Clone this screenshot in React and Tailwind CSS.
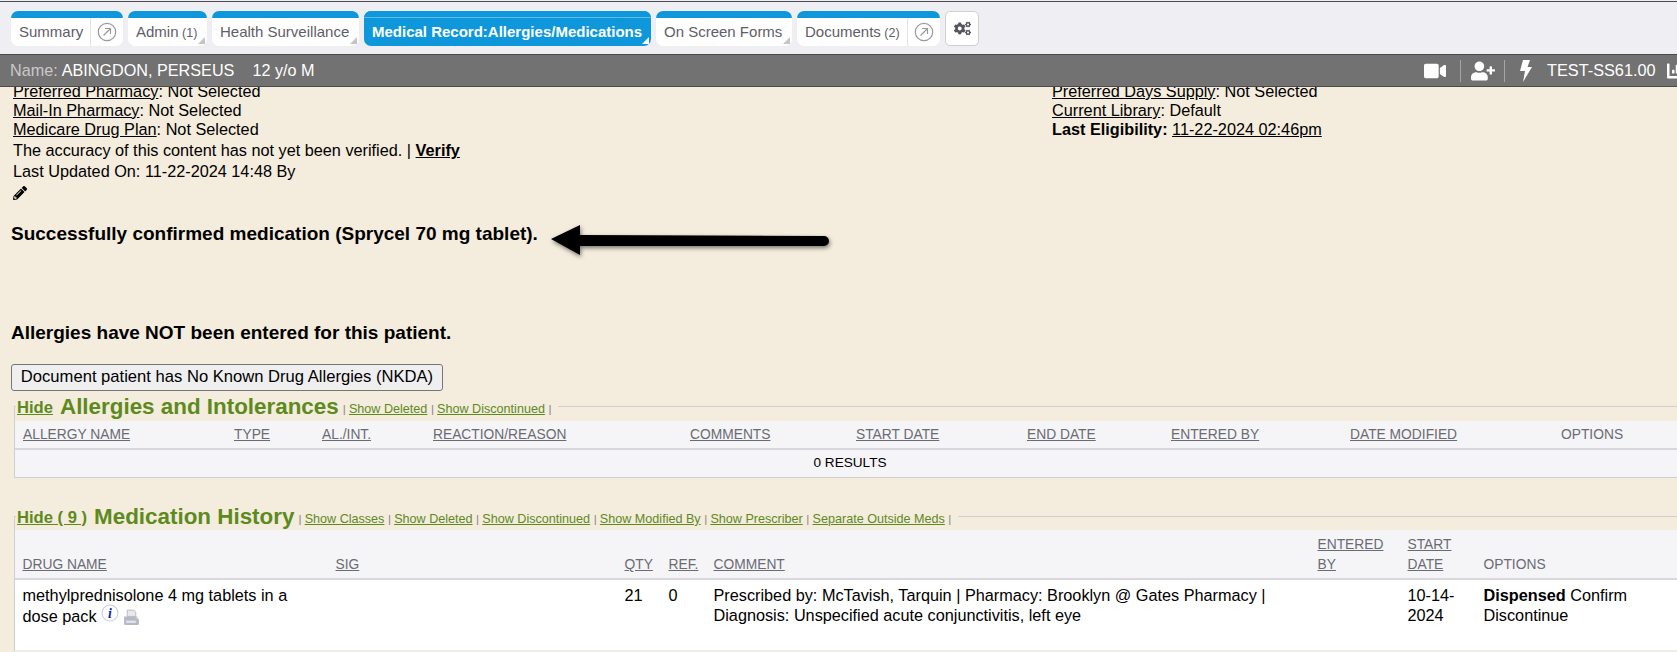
import React from "react";
import { FaVideo, FaUserPlus, FaPencilAlt, FaCogs, FaChartBar } from "react-icons/fa";

const Corner = ({ light }) => (
  <span className={`absolute right-[2px] bottom-[2px] w-0 h-0 border-l-[7px] border-l-transparent border-b-[7px] ${light ? "border-b-white" : "border-b-[#c4c4c4]"}`} />
);

const Circle = () => (
  <span className="flex items-center justify-center w-[33px] h-full shrink-0 border-l border-[#e4e4e8]">
    <svg width="20" height="20" viewBox="0 0 20 20" fill="none" stroke="#9a9a9a" strokeWidth="1.2">
      <circle cx="10" cy="10" r="8.7" />
      <path d="M6.5 13.5 L13.5 6.5 M8 6.5 H13.5 V12" />
    </svg>
  </span>
);

const Tab = ({ label, count, width, active, corner, circle }) => (
  <div className={`relative shrink-0 h-[35px] rounded-[7px] overflow-hidden flex flex-col ${active ? "bg-[#0e97da]" : "bg-white"}`} style={{ width }}>
    <div className={`h-[7px] bg-[#0e97da] shrink-0 ${active ? "border-b border-[#5dbbe8]" : ""}`} />
    <div className={`flex-1 flex items-center ${circle ? "justify-between" : ""} pl-[8px]`}>
      <span className={`text-[15px] whitespace-nowrap ${active ? "font-bold text-white" : "text-[#5e5e66]"}`}>
        {label}
        {count && <span className="text-[12.5px]"> {count}</span>}
      </span>
      {circle && <Circle />}
    </div>
    {corner && <Corner light={active} />}
  </div>
);

const Link = ({ children, className = "" }) => <span className={`underline ${className}`}>{children}</span>;

const Th = ({ children, className = "", plain }) => (
  <div className={`text-[13.8px] leading-[20px] text-[#6b6b73] ${plain ? "" : "underline"} ${className}`}>{children}</div>
);

const Legend = ({ hide, title, links, height, pad, lineTop }) => (
  <div className={`relative flex items-end bg-[#f4ecdd] ${pad}`} style={{ height }}>
    <span className={`absolute left-[1px] right-0 h-px bg-[#cfcfcf] ${lineTop}`} />
    <span className={`absolute left-[1px] bottom-0 w-px bg-[#cfcfcf] ${lineTop}`} />
    <div className="relative flex items-end text-[#5d8a1c] ml-[3px] px-[1px] whitespace-nowrap bg-[#f4ecdd]">
      <span className="text-[16.6px] font-bold underline leading-[20px]">{hide}</span>
      <span className="text-[22.4px] font-bold leading-[26px] ml-[7px] -mb-[2px]">{title}</span>
      <span className="text-[12.6px] leading-[18px] ml-[4px] pr-[6px]">
        {links.map((l) => (
          <span key={l}>
            <span className="text-[#888] text-[11.6px]">| </span>
            <span className="underline">{l}</span>{" "}
          </span>
        ))}
        <span className="text-[#888] text-[11.6px]">|</span>
      </span>
    </div>
  </div>
);

export default function App() {
  return (
    <div className="w-[1677px] h-[652px] overflow-hidden bg-[#f4ecdd] text-black text-[16.25px]" style={{ fontFamily: '"Liberation Sans", Arial, sans-serif' }}>
      <div className="h-px bg-[#eeeef3]" />
      <div className="h-[54px] bg-[#eeeef3] border-t border-t-[#4a4a52] border-b border-b-[#4a4a52] flex items-start gap-[5px] pl-[11px] pt-[9px]">
        <Tab label="Summary" width={112} circle />
        <Tab label="Admin" count="(1)" width={79} corner />
        <Tab label="Health Surveillance" width={147} corner />
        <Tab label="Medical Record:Allergies/Medications" width={287} active corner />
        <Tab label="On Screen Forms" width={136} corner />
        <Tab label="Documents" count="(2)" width={143} circle />
        <div className="w-[34px] h-[35px] bg-white border border-[#cfcfd4] rounded-[5px] flex items-center justify-center text-[#55555c]">
          <FaCogs size={17} />
        </div>
      </div>

      <div className="relative z-10 h-[32px] bg-[#727272] border-b border-[#4a4a4a] flex items-center text-[16.2px] pl-[10px] overflow-hidden">
        <span className="text-[#c9c9c9]">Name:</span>
        <span className="text-white ml-[4px]">ABINGDON, PERSEUS</span>
        <span className="text-white ml-[18px]">12 y/o M</span>
        <div className="ml-auto flex items-center text-white shrink-0 w-[253px]">
          <FaVideo size={22} className="shrink-0" />
          <span className="ml-[14px] h-[22px] w-px bg-[#a5a5a5] shrink-0" />
          <FaUserPlus size={24} className="ml-[10px] shrink-0" />
          <span className="ml-[9px] h-[22px] w-px bg-[#a5a5a5] shrink-0" />
          <svg className="ml-[15px] shrink-0" width="12" height="22" viewBox="0 0 12 22" fill="#fff">
            <path d="M3 0 H10 L7.5 7 H12 L3 22 L5 11 H0 Z" />
          </svg>
          <span className="ml-[15px] text-[16.3px] whitespace-nowrap shrink-0">TEST-SS61.00</span>
          <FaChartBar size={20} className="ml-[11px] shrink-0" />
        </div>
      </div>

      <div className="relative pl-[13px]">
        <div className="flex -mt-[5px]">
          <div className="w-[1039px] shrink-0">
            <div className="leading-[19px]"><Link>Preferred Pharmacy</Link>: Not Selected</div>
            <div className="leading-[19px]"><Link>Mail-In Pharmacy</Link>: Not Selected</div>
            <div className="leading-[19px]"><Link>Medicare Drug Plan</Link>: Not Selected</div>
            <div className="leading-[21px] mt-px">The accuracy of this content has not yet been verified. | <Link className="font-bold">Verify</Link></div>
            <div className="leading-[21px]">Last Updated On: 11-22-2024 14:48 By</div>
            <div className="h-[21px] flex items-center"><FaPencilAlt size={14} /></div>
          </div>
          <div>
            <div className="leading-[19px]"><Link>Preferred Days Supply</Link>: Not Selected</div>
            <div className="leading-[19px]"><Link>Current Library</Link>: Default</div>
            <div className="leading-[19px]"><b>Last Eligibility:</b> <Link>11-22-2024 02:46pm</Link></div>
          </div>
        </div>

        <div className="relative -ml-[2px] mt-[19px] text-[19px] font-bold leading-[24px]">
          Successfully confirmed medication (Sprycel 70 mg tablet).
          <svg className="absolute left-[539px] top-[-2px] drop-shadow-[1px_2px_2px_rgba(0,0,0,0.5)]" width="285" height="40" viewBox="0 0 285 40">
            <path d="M1 19 L30 5 L30 15 L274 16 A5 5 0 0 1 274 26 L30 26 L30 35 Z" fill="#000" />
          </svg>
        </div>

        <div className="-ml-[2px] mt-[75px] text-[19px] font-bold leading-[24px]">Allergies have NOT been entered for this patient.</div>

        <button className="block -ml-[2px] mt-[19px] h-[27px] w-[432px] border border-[#767676] rounded-[3px] bg-[#efefef] text-[16.6px] leading-none text-black">
          Document patient has No Known Drug Allergies (NKDA)
        </button>

        <Legend hide="Hide" title="Allergies and Intolerances" height={30} pad="pb-[3px]" lineTop="top-[15px]" links={["Show Deleted", "Show Discontinued"]} />
        <div className="ml-[1px] bg-[#f5f5f8] border-l border-b border-[#cfcfcf] h-[57px]">
          <div className="h-[29px] border-b-2 border-[#d7d7dc] flex items-center pl-[8px]">
            <Th className="w-[211px]">ALLERGY NAME</Th>
            <Th className="w-[88px]">TYPE</Th>
            <Th className="w-[111px]">AL./INT.</Th>
            <Th className="w-[257px]">REACTION/REASON</Th>
            <Th className="w-[166px]">COMMENTS</Th>
            <Th className="w-[171px]">START DATE</Th>
            <Th className="w-[144px]">END DATE</Th>
            <Th className="w-[179px]">ENTERED BY</Th>
            <Th className="w-[211px]">DATE MODIFIED</Th>
            <Th plain>OPTIONS</Th>
          </div>
          <div className="h-[26px] flex items-center justify-center text-[13.6px] text-black pl-[8px] pt-[1px]">0 RESULTS</div>
        </div>

        <div className="mt-[22px]">
          <Legend
            hide="Hide ( 9 )"
            title="Medication History"
            height={30}
            pad="pb-[2px]"
            lineTop="top-[16px]"
            links={["Show Classes", "Show Deleted", "Show Discontinued", "Show Modified By", "Show Prescriber", "Separate Outside Meds"]}
          />
        </div>
        <div className="ml-[1px] border-l border-[#cfcfcf]">
          <div className="bg-[#f5f5f8] h-[50px] border-b-2 border-[#d7d7dc] flex items-end pl-[7.5px] pb-[3px]">
            <Th className="w-[313px]">DRUG NAME</Th>
            <Th className="w-[289px]">SIG</Th>
            <Th className="w-[44px]">QTY</Th>
            <Th className="w-[45px]">REF.</Th>
            <Th className="w-[604px]">COMMENT</Th>
            <Th className="w-[90px]">ENTERED<br />BY</Th>
            <Th className="w-[76px]">START<br />DATE</Th>
            <Th plain>OPTIONS</Th>
          </div>
          <div className="bg-white h-[71px] flex pl-[7.5px] pt-[5px] leading-[20px] border-b border-[#eeeeee]">
            <div className="w-[313px]">
              <div className="w-[290px]">methylprednisolone 4 mg tablets in a</div>
              <div className="flex items-center h-[22px]">
                dose pack
                <svg className="ml-[4px] -mt-[7px] shrink-0" width="18" height="18" viewBox="0 0 17 17">
                  <circle cx="8.5" cy="8.5" r="7.5" fill="#fff" stroke="#c8cbe0" />
                  <text x="8.5" y="13" textAnchor="middle" fontFamily="Liberation Serif" fontStyle="italic" fontWeight="bold" fontSize="13" fill="#1a1aa8">i</text>
                </svg>
                <svg className="ml-[4px] mt-[2px] shrink-0" width="17" height="17" viewBox="0 0 16 16">
                  <path d="M4 1h6l2 2v4H4z" fill="#e8e9ee" stroke="#a8adb8" strokeWidth="0.7" />
                  <path d="M1 7h12l2 3v4a1 1 0 0 1-1 1H2a1 1 0 0 1-1-1z" fill="#b5bac6" />
                  <rect x="3" y="11" width="9" height="2" fill="#e6e7ec" />
                  <rect x="12" y="8" width="2" height="1.5" fill="#e8d58c" />
                </svg>
              </div>
            </div>
            <div className="w-[289px]" />
            <div className="w-[44px]">21</div>
            <div className="w-[45px]">0</div>
            <div className="w-[604px]">
              Prescribed by: McTavish, Tarquin | Pharmacy: Brooklyn @ Gates Pharmacy |<br />
              Diagnosis: Unspecified acute conjunctivitis, left eye
            </div>
            <div className="w-[90px]" />
            <div className="w-[76px]">10-14-<br />2024</div>
            <div><b>Dispensed</b> Confirm<br />Discontinue</div>
          </div>
        </div>
      </div>
    </div>
  );
}
